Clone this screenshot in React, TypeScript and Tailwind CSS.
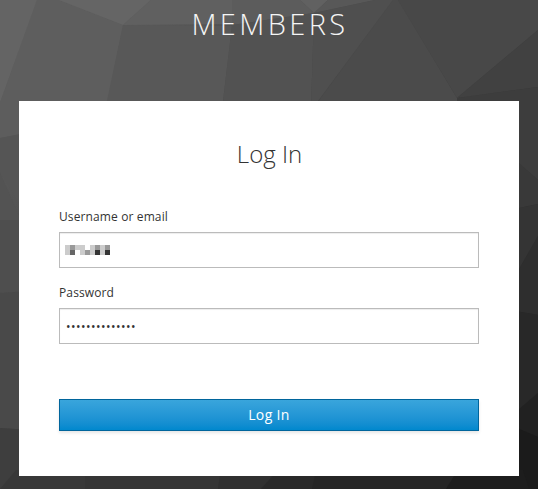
import { useState } from 'react';

const facets = [
  { points: '0,0 37,0 0,103', fill: '#646464' },
  { points: '37,0 59,0 123,25 106,110 0,110 0,103', fill: '#5e5e5e' },
  { points: '59,0 151,0 123,25', fill: '#656565' },
  { points: '151,0 232,0 233,24 123,25', fill: '#606060' },
  { points: '123,25 232,26 222,110 105,110', fill: '#585858' },
  { points: '232,0 300,0 314,13 232,25', fill: '#5c5c5c' },
  { points: '300,0 328,0 314,13', fill: '#616161' },
  { points: '328,0 375,0 314,13', fill: '#585858' },
  { points: '232,25 314,13 311,110 222,110', fill: '#525252' },
  { points: '314,13 375,0 393,0 318,101 311,110', fill: '#4f4f4f' },
  { points: '393,0 398,0 457,98 457,110 312,110', fill: '#4b4b4b' },
  { points: '398,0 538,0 538,30 457,98', fill: '#484848' },
  { points: '538,30 538,87 457,98', fill: '#414141' },
  { points: '457,98 538,87 538,180 457,110', fill: '#3d3d3d' },
  // left edge
  { points: '0,103 5,90 60,90 60,130 19,135 0,138', fill: '#5d5d5d' },
  { points: '0,138 30,132 30,221 0,172', fill: '#555555' },
  { points: '0,172 19,216 19,220 0,220', fill: '#535353' },
  { points: '0,220 30,220 30,291 0,293', fill: '#4e4e4e' },
  { points: '0,293 30,291 30,430 0,428', fill: '#494949' },
  { points: '0,428 30,430 39,470 39,489 0,489', fill: '#3e3e3e' },
  // right edge
  { points: '510,155 538,180 538,204 510,210', fill: '#393939' },
  { points: '510,210 538,204 538,236 510,285', fill: '#343434' },
  { points: '538,236 538,315 510,310 510,285', fill: '#2e2e2e' },
  { points: '510,310 538,315 538,393 510,417', fill: '#282828' },
  { points: '538,393 538,437 510,425 510,417', fill: '#212121' },
  { points: '510,425 538,437 538,489 510,489', fill: '#1b1b1b' },
  // bottom edge
  { points: '0,489 16,470 85,470 85,489', fill: '#383838' },
  { points: '85,470 221,470 218,489 85,489', fill: '#353535' },
  { points: '221,470 278,470 261,489 218,489', fill: '#303030' },
  { points: '278,470 316,470 312,489 261,489', fill: '#292929' },
  { points: '316,470 458,470 446,489 312,489', fill: '#252525' },
  { points: '458,470 523,470 529,489 446,489', fill: '#1d1d1d' },
];

const mosaic = [
  '#cccccc', '#999999', '#cccccc', '#cccccc', '#ffffff', '#cccccc', '#999999', '#cccccc', '#999999',
  '#cccccc', '#666666', '#ffffff', '#cccccc', '#999999', '#cccccc', '#333333', '#cccccc', '#333333',
];

function Background() {
  return (
    <svg className="absolute inset-0 h-full w-full" viewBox="0 0 538 489" preserveAspectRatio="none" aria-hidden="true">
      <defs>
        <linearGradient id="base" x1="0" y1="0" x2="1" y2="1">
          <stop offset="0" stopColor="#646464" />
          <stop offset="1" stopColor="#1b1b1b" />
        </linearGradient>
      </defs>
      <rect width="538" height="489" fill="url(#base)" />
      {facets.map((facet) => (
        <polygon key={facet.points} points={facet.points} fill={facet.fill} />
      ))}
    </svg>
  );
}

export default function App() {
  const [password, setPassword] = useState('abcdefghijklmn');

  return (
    <div className="relative h-[489px] w-full overflow-hidden font-['Open_Sans',sans-serif] text-[#333]">
      <Background />
      <div className="relative flex flex-col items-center">
        <h1 className="flex h-[101px] items-start pt-[4px] pl-[2px] text-[29px] leading-[40px] font-light tracking-[3.4px] text-[#f5f5f5]">
          MEMBERS
        </h1>
        <main className="h-[375px] w-[500px] bg-white px-10 pt-[36px]">
          <h2 className="pl-px text-center text-2xl leading-[34px] font-light">Log In</h2>
          <form className="mt-[37px]" onSubmit={(e) => e.preventDefault()}>
            <label className="block h-[24px] text-xs leading-[18px] tracking-[0.12px]">Username or email</label>
            <div className="flex h-9 items-center border border-[#bbb] px-[5px] shadow-[inset_0_1px_1px_rgba(3,3,3,0.075)]">
              <div className="grid grid-cols-[repeat(9,5px)] grid-rows-[5px_5px]">
                {mosaic.map((color, i) => (
                  <span key={i} style={{ backgroundColor: color }} />
                ))}
              </div>
            </div>
            <label htmlFor="password" className="mt-4 block h-[24px] text-xs leading-[18px] tracking-[0.12px]">
              Password
            </label>
            <input
              id="password"
              type="password"
              value={password}
              onChange={(e) => setPassword(e.target.value)}
              className="block h-9 w-full border border-[#bbb] px-[6px] text-xs tracking-[0.48px] shadow-[inset_0_1px_1px_rgba(3,3,3,0.075)] outline-none"
            />
            <button
              type="submit"
              className="mt-[55px] block h-8 w-full border border-[#00659c] bg-linear-to-b from-[#39a5dc] to-[#0088ce] text-sm leading-[30px] font-medium tracking-[0.35px] text-white shadow-[0_2px_3px_rgba(3,3,3,0.1)]"
            >
              Log In
            </button>
          </form>
        </main>
      </div>
    </div>
  );
}
